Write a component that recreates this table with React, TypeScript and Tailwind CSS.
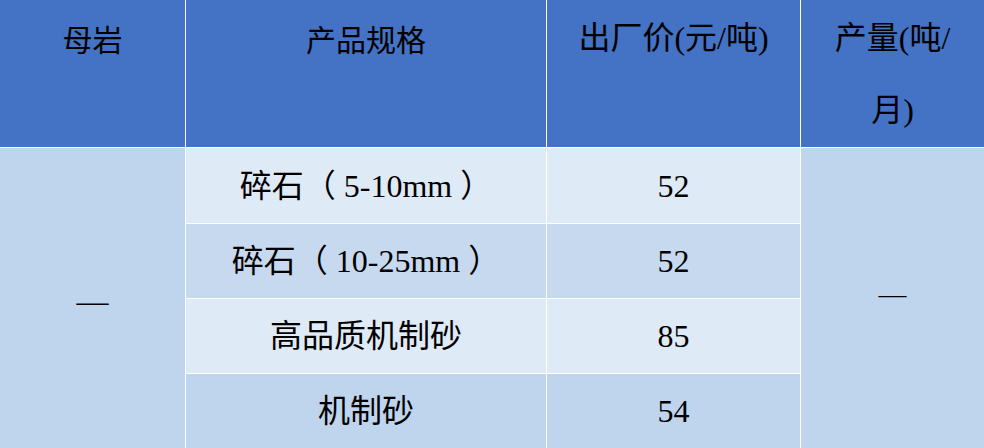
const rows = [
  { spec: "碎石（ 5-10mm ）", price: "52", bg: "bg-[#deeaf6]" },
  { spec: "碎石（ 10-25mm ）", price: "52", bg: "bg-[#c6d9ef]" },
  { spec: "高品质机制砂", price: "85", bg: "bg-[#deeaf6]" },
  { spec: "机制砂", price: "54", bg: "bg-[#bfd5ed]" },
];

const font = "font-['Liberation_Serif','Noto_Sans_CJK_SC',serif]";

export default function App() {
  return (
    <div
      className={`grid h-[448px] w-[984px] grid-cols-[185px_360px_253px_183px] grid-rows-[147px_75px_74px_74px_74px] gap-px bg-white text-[32px] text-black ${font}`}
    >
      <div className="bg-[#4472c4] pt-[2px] text-center leading-[72px] font-['Noto_Sans_CJK_SC',sans-serif] text-[30px]">母岩</div>
      <div className="bg-[#4472c4] pt-[2px] text-center leading-[72px] font-['Noto_Sans_CJK_SC',sans-serif] text-[30px]">产品规格</div>
      <div className="bg-[#4472c4] pt-[2px] text-center leading-[72px]">
        出厂价(元/吨)
      </div>
      <div className="bg-[#4472c4] pt-[2px] text-center leading-[72px]">
        产量(吨/
        <br />
        月)
      </div>

      <div className="row-span-4 row-start-2 col-start-1 flex items-center justify-center bg-[#bfd5ed] pt-[6px]">
        —
      </div>
      {rows.map((r, i) => (
        <div key={i} className="contents">
          <div
            className={`col-start-2 flex items-center justify-center ${r.bg}`}
            style={{ gridRowStart: i + 2 }}
          >
            {r.spec}
          </div>
          <div
            className={`col-start-3 flex items-center justify-center ${r.bg}`}
            style={{ gridRowStart: i + 2 }}
          >
            {r.price}
          </div>
        </div>
      ))}
      <div className="row-span-4 row-start-2 col-start-4 flex items-start justify-center bg-[#bfd5ed] pt-[132px] text-[28px] leading-none">
        —
      </div>
    </div>
  );
}
